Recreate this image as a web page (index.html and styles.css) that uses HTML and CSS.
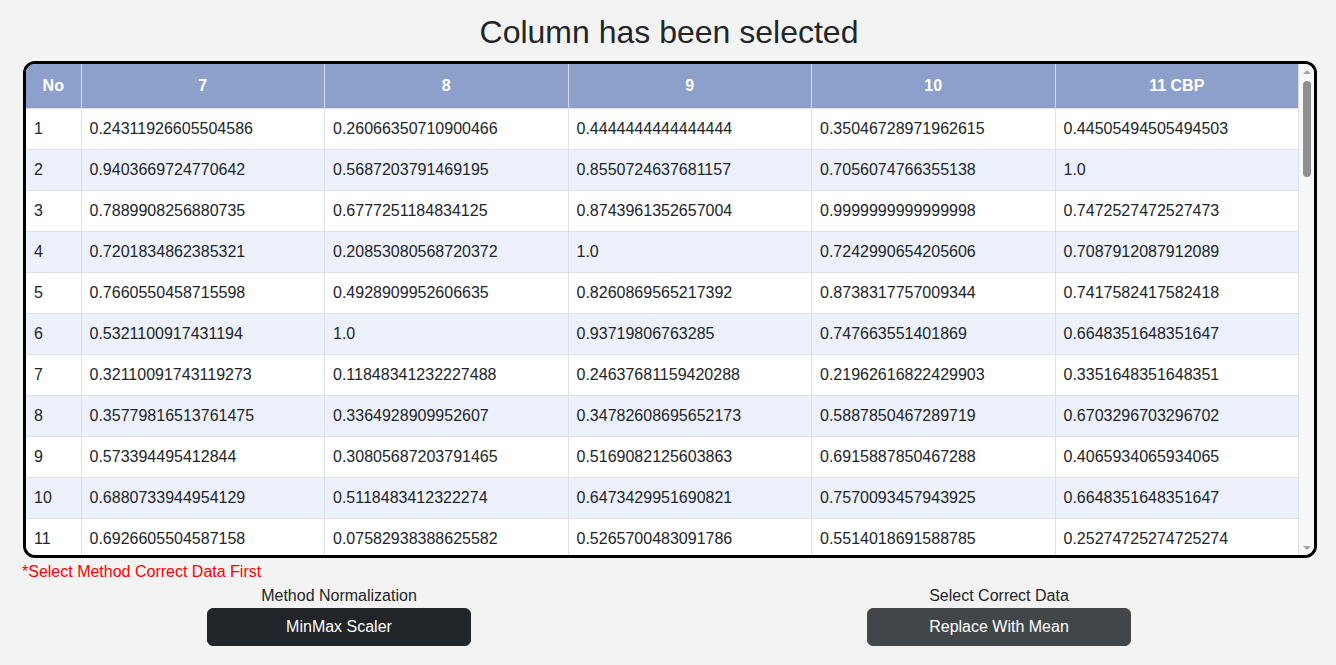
FILE: index.html
```html
<!DOCTYPE html>
<html lang="en">
<head>
<meta charset="utf-8">
<title>Column has been selected</title>
<link rel="stylesheet" href="styles.css">
</head>
<body>
<main class="page">
  <h2 class="title">Column has been selected</h2>
  <div class="table-box">
    <div class="table-scroll">
      <table class="data-table">
        <thead>
          <tr><th class="col-no">No</th><th>7</th><th>8</th><th>9</th><th>10</th><th>11 CBP</th></tr>
        </thead>
        <tbody>
          <tr><td>1</td><td>0.24311926605504586</td><td>0.26066350710900466</td><td>0.4444444444444444</td><td>0.35046728971962615</td><td>0.44505494505494503</td></tr>
          <tr><td>2</td><td>0.9403669724770642</td><td>0.5687203791469195</td><td>0.8550724637681157</td><td>0.7056074766355138</td><td>1.0</td></tr>
          <tr><td>3</td><td>0.7889908256880735</td><td>0.6777251184834125</td><td>0.8743961352657004</td><td>0.9999999999999998</td><td>0.7472527472527473</td></tr>
          <tr><td>4</td><td>0.7201834862385321</td><td>0.20853080568720372</td><td>1.0</td><td>0.7242990654205606</td><td>0.7087912087912089</td></tr>
          <tr><td>5</td><td>0.7660550458715598</td><td>0.4928909952606635</td><td>0.8260869565217392</td><td>0.8738317757009344</td><td>0.7417582417582418</td></tr>
          <tr><td>6</td><td>0.5321100917431194</td><td>1.0</td><td>0.93719806763285</td><td>0.747663551401869</td><td>0.6648351648351647</td></tr>
          <tr><td>7</td><td>0.32110091743119273</td><td>0.11848341232227488</td><td>0.24637681159420288</td><td>0.21962616822429903</td><td>0.3351648351648351</td></tr>
          <tr><td>8</td><td>0.35779816513761475</td><td>0.3364928909952607</td><td>0.34782608695652173</td><td>0.5887850467289719</td><td>0.6703296703296702</td></tr>
          <tr><td>9</td><td>0.573394495412844</td><td>0.30805687203791465</td><td>0.5169082125603863</td><td>0.6915887850467288</td><td>0.4065934065934065</td></tr>
          <tr><td>10</td><td>0.6880733944954129</td><td>0.5118483412322274</td><td>0.6473429951690821</td><td>0.7570093457943925</td><td>0.6648351648351647</td></tr>
          <tr><td>11</td><td>0.6926605504587158</td><td>0.07582938388625582</td><td>0.5265700483091786</td><td>0.5514018691588785</td><td>0.25274725274725274</td></tr>
        </tbody>
      </table>
    </div>
    <div class="rail" aria-hidden="true">
      <div class="rail-btn"><span class="arrow-up"></span></div>
      <div class="rail-track"><div class="rail-thumb"></div></div>
      <div class="rail-btn"><span class="arrow-down"></span></div>
    </div>
  </div>
  <p class="note">*Select Method Correct Data First</p>
  <div class="actions">
    <div class="action">
      <span class="action-label">Method Normalization</span>
      <button class="btn btn-dark" type="button">MinMax Scaler</button>
    </div>
    <div class="action">
      <span class="action-label">Select Correct Data</span>
      <button class="btn btn-grey" type="button">Replace With Mean</button>
    </div>
  </div>
</main>
</body>
</html>
```

FILE: styles.css
```css
* { box-sizing: border-box; }

html, body {
  margin: 0;
  padding: 0;
  background: #f3f3f3;
}

body {
  font-family: "Liberation Sans", Arial, sans-serif;
  font-size: 16px;
  line-height: 24px;
  color: #212529;
}

.page {
  width: 1320px;
  margin-left: 9px;
}

.title {
  margin: 0;
  padding-top: 13px;
  font-size: 32px;
  line-height: 38px;
  font-weight: 400;
  text-align: center;
  color: #212529;
}

.table-box {
  display: flex;
  margin: 10px 12px 0 14px;
  height: 497px;
  border: 3px solid #000;
  border-radius: 12px;
  overflow: hidden;
  background: #fff;
}

.table-scroll {
  flex: 1;
  min-width: 0;
  overflow: hidden;
}

.data-table {
  width: 100%;
  table-layout: fixed;
  border-collapse: collapse;
}

.data-table th,
.data-table td {
  border-right: 1px solid #dee2e6;
  border-bottom: 1px solid #dee2e6;
  padding: 8px;
  text-align: left;
  white-space: nowrap;
  overflow: hidden;
}

.data-table thead th {
  background: #8da0cb;
  color: #fff;
  font-weight: 700;
  text-align: center;
  padding: 10px 8px;
  border-right-color: #d8dde9;
}

.data-table .col-no { width: 55px; }

.data-table tbody tr:nth-child(odd) td { background: #fff; }
.data-table tbody tr:nth-child(even) td { background: #edf1fc; }

.rail {
  width: 15px;
  flex: none;
  display: flex;
  flex-direction: column;
  background: #f8f8f8;
}

.rail-btn {
  height: 15px;
  flex: none;
  display: flex;
  align-items: center;
  justify-content: center;
}

.arrow-up {
  width: 0;
  height: 0;
  border-left: 4px solid transparent;
  border-right: 4px solid transparent;
  border-bottom: 4px solid #a3a3a3;
}

.arrow-down {
  width: 0;
  height: 0;
  border-left: 4px solid transparent;
  border-right: 4px solid transparent;
  border-top: 4px solid #a3a3a3;
}

.rail-track {
  flex: 1;
  display: flex;
  flex-direction: column;
  align-items: center;
  padding-top: 2px;
}

.rail-thumb {
  width: 8px;
  height: 96px;
  border-radius: 4px;
  background: #8f8f8f;
}

.note {
  margin: 0;
  padding-top: 2px;
  padding-left: 13px;
  color: #ff0000;
}

.actions {
  display: grid;
  grid-template-columns: 660px 660px;
}

.action {
  display: flex;
  flex-direction: column;
  align-items: center;
}

.action-label {
  line-height: 24px;
}

.btn {
  width: 264px;
  height: 38px;
  border: 1px solid transparent;
  border-radius: 6px;
  font-family: inherit;
  font-size: 16px;
  line-height: 24px;
  color: #fff;
  cursor: pointer;
}

.btn-dark { background: #212529; border-color: #212529; }
.btn-grey { background: #424649; border-color: #424649; }
```
